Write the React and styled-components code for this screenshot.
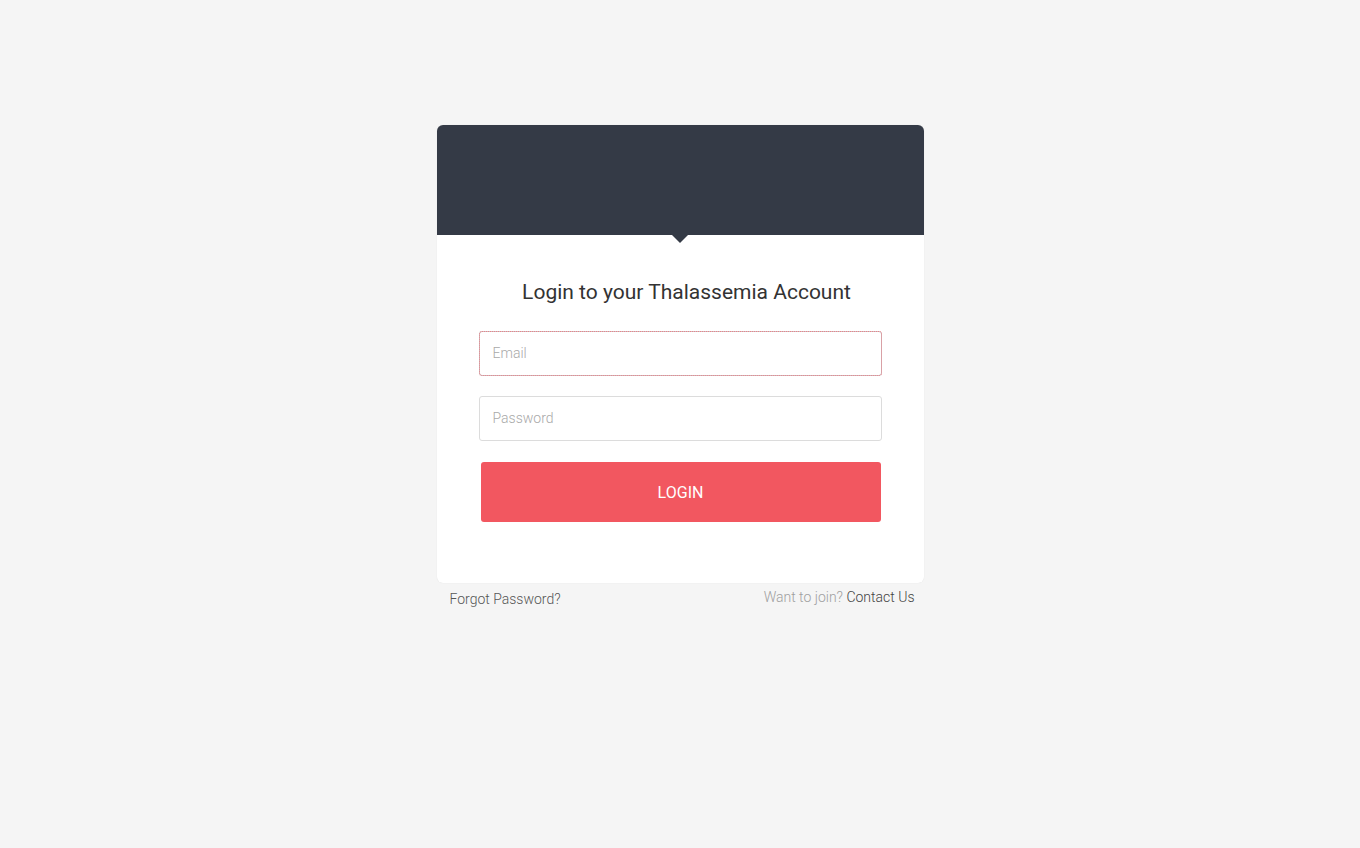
import React from "react";
import styled, { createGlobalStyle } from "styled-components";

const GlobalStyle = createGlobalStyle`
  html, body {
    margin: 0;
    padding: 0;
    background: #f5f5f5;
    font-family: Roboto, "Liberation Sans", sans-serif;
  }
`;

const Page = styled.div`
  min-height: 848px;
  display: flex;
  flex-direction: column;
  align-items: center;
  padding-top: 125px;
  box-sizing: border-box;
`;

const Wrapper = styled.div`
  width: 487px;
`;

const Card = styled.div`
  background: #fff;
  border-radius: 6px;
  box-shadow: 0 0 1px rgba(0, 0, 0, 0.12);
`;

const Header = styled.div`
  position: relative;
  height: 110px;
  background: #343a46;
  border-radius: 6px 6px 0 0;

  &::after {
    content: "";
    position: absolute;
    left: 50%;
    bottom: -8px;
    margin-left: -8px;
    border-left: 8px solid transparent;
    border-right: 8px solid transparent;
    border-top: 8px solid #343a46;
  }
`;

const Body = styled.form`
  display: flex;
  flex-direction: column;
  padding: 44px 42px 61px;
`;

const Title = styled.h2`
  margin: 0 0 26px;
  text-align: center;
  padding-left: 13px;
  font-size: 21px;
  font-weight: 400;
  color: #333;
  line-height: 26px;
`;

const Field = styled.input`
  box-sizing: border-box;
  width: 100%;
  height: 45px;
  margin-bottom: 20px;
  padding: 0 13px 2px;
  font-family: Roboto, "Liberation Sans", sans-serif;
  font-size: 14px;
  font-weight: 300;
  color: #333;
  background: #fff;
  border: 1px solid ${(p) => (p.$focused ? "#c4c4c4" : "#dcdcdc")};
  border-radius: 3px;
  outline: ${(p) => (p.$focused ? "1px dotted #ee7f88" : "none")};
  outline-offset: -1px;

  &::placeholder {
    color: #a9a9a9;
    font-weight: 300;
  }
`;

const Button = styled.button`
  height: 60px;
  margin: 1px 1px 0 2px;
  border: none;
  border-radius: 3px;
  background: #f25760;
  color: #fff;
  font-family: Roboto, "Liberation Sans", sans-serif;
  font-size: 16px;
  font-weight: 400;
  text-transform: uppercase;
  cursor: pointer;
`;

const Footer = styled.div`
  display: flex;
  justify-content: space-between;
  padding: 6px 9px 0 13px;
  font-size: 14px;
  font-weight: 300;
`;

const Link = styled.a`
  color: ${(p) => p.$color || "#444"};
  text-decoration: none;
  margin-top: ${(p) => p.$offset || 0}px;
`;

const Muted = styled.span`
  color: #a0a0a0;
`;

export default function App() {
  return (
    <>
      <GlobalStyle />
      <Page>
        <Wrapper>
          <Card>
            <Header />
            <Body onSubmit={(e) => e.preventDefault()}>
              <Title>Login to your Thalassemia Account</Title>
              <Field $focused type="email" placeholder="Email" />
              <Field type="password" placeholder="Password" />
              <Button type="submit">Login</Button>
            </Body>
          </Card>
          <Footer>
            <Link href="#" $color="#555" $offset={2}>Forgot Password?</Link>
            <span>
              <Muted>Want to join? </Muted>
              <Link href="#" $color="#444">Contact Us</Link>
            </span>
          </Footer>
        </Wrapper>
      </Page>
    </>
  );
}
